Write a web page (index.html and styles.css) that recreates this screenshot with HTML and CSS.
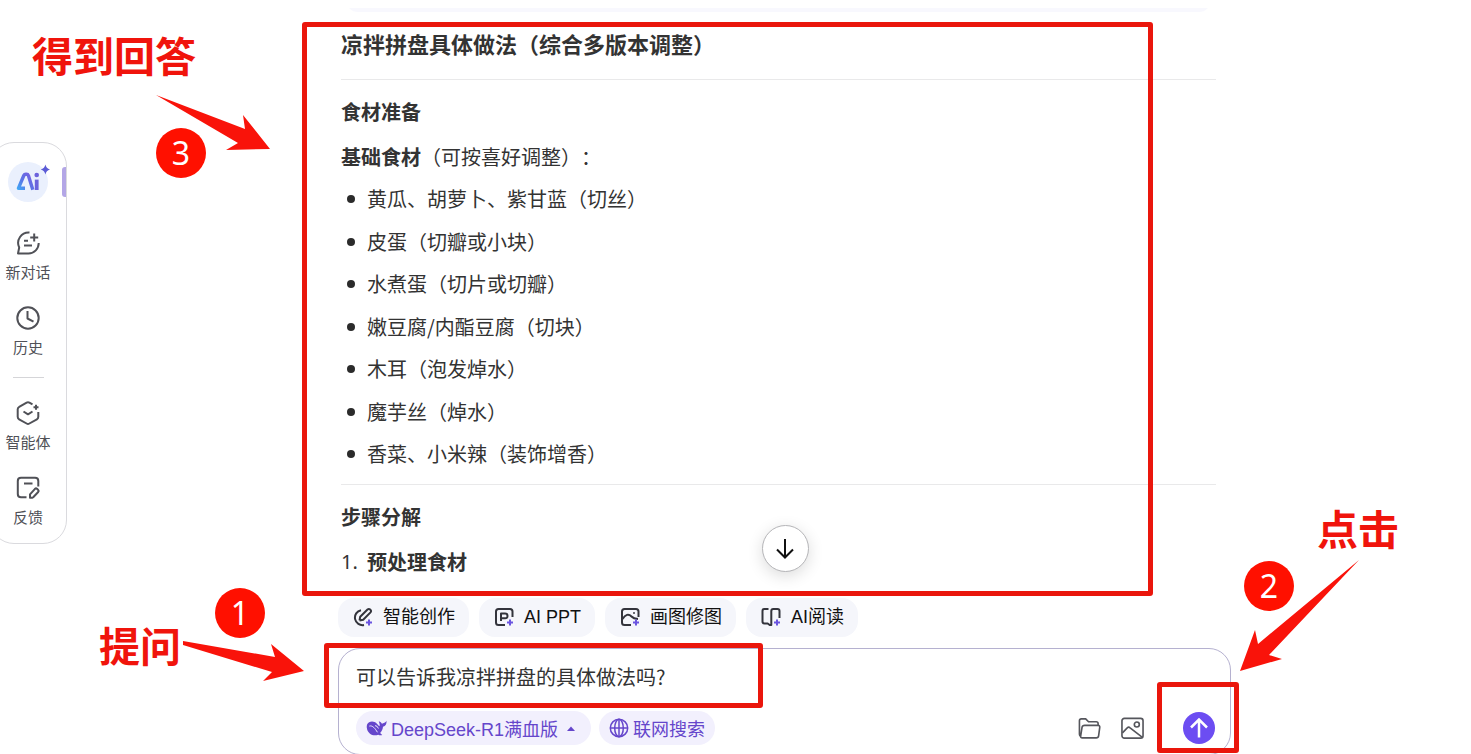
FILE: index.html
```html
<!DOCTYPE html>
<html lang="zh-CN">
<head>
<meta charset="utf-8">
<meta name="viewport" content="width=device-width, initial-scale=1">
<title>AI 对话</title>
<link rel="stylesheet" href="styles.css">
</head>
<body>
<div class="shell">
  <nav class="sidebar" aria-label="主导航">
    <a class="brand" href="#" aria-label="AI 首页">
      <svg width="42" height="42" viewBox="0 0 42 42" aria-hidden="true">
        <defs><linearGradient id="brandFill" x1="0" y1="1" x2="1" y2="0"><stop offset="0" stop-color="#3fa8f5"/><stop offset=".45" stop-color="#5a74e6"/><stop offset="1" stop-color="#7a5ce0"/></linearGradient></defs>
        <circle cx="20" cy="22" r="20" fill="#eaf0fd"/>
        <path d="M17 28.300h-6.600l5.400-12.800q.6-1.300 2-1.300h.7q1.400 0 1.900 1.300l4.400 14.300" fill="none" stroke="url(#brandFill)" stroke-width="3.400" stroke-linejoin="round"/>
        <path d="M28.700 19.600V30" stroke="#6c62dc" stroke-width="3.800"/>
        <circle cx="28.700" cy="15" r="2.300" fill="#6c62dc"/>
        <path d="M37.400 4.500q.8 4 4.600 5-3.800.9-4.600 5-.8-4.100-4.600-5 3.800-1 4.600-5z" fill="#5b5bd6"/>
      </svg>
    </a>
    <a class="nav-item" href="#">
      <svg class="nav-icon" viewBox="0 0 24 24" aria-hidden="true"><path d="M13.500 1.500A10.500 10.500 0 0 0 3.200 16.500L2 22.500h10.500a10.300 10.300 0 0 0 10.200-10.500M8 9.800h4M8 14.500h8M18.200 2.500v8M14.200 6.500h8"/></svg>
      <span>新对话</span>
    </a>
    <a class="nav-item" href="#">
      <svg class="nav-icon" viewBox="0 0 24 24" aria-hidden="true"><circle cx="12" cy="12" r="10.700"/><path d="M11.500 5v7.500l6 3.200"/></svg>
      <span>历史</span>
    </a>
    <hr class="nav-divider">
    <a class="nav-item" href="#">
      <svg class="nav-icon" viewBox="0 0 24 24" aria-hidden="true"><path d="M16.500 3.300 13.400 1.600q-1.400-.8-2.800 0L3.200 5.800Q1.700 6.600 1.700 8.300v7.500q0 1.700 1.400 2.500l7.500 4.200q1.400.8 2.800 0l7.500-4.200q1.400-.8 1.400-2.500V11M7.500 10.500 12 13.300l4.500-2.800M20 3.700v5M17.500 6.200h5"/></svg>
      <span>智能体</span>
    </a>
    <a class="nav-item" href="#">
      <svg class="nav-icon" viewBox="0 0 24 24" aria-hidden="true"><path d="M22.300 10.500V5q0-3.200-3.200-3.200H5Q1.800 1.800 1.800 5v13q0 3.300 3.200 3.300h5.500M8 7.500h8.500M14 21.800v-3.500l5-5.500q1-.8 2 0l1.200 1.200q.8 1 0 2l-5 5.200q-1 .8-3.200.6z"/></svg>
      <span>反馈</span>
    </a>
  </nav>

  <main class="main">
    <div class="column">
      <div class="previous"></div>
      <article class="answer">
        <h2>凉拌拼盘具体做法（综合多版本调整）</h2>
        <hr>
        <h3>食材准备</h3>
        <p><strong>基础食材</strong>（可按喜好调整）：</p>
        <ul>
          <li>黄瓜、胡萝卜、紫甘蓝（切丝）</li>
          <li>皮蛋（切瓣或小块）</li>
          <li>水煮蛋（切片或切瓣）</li>
          <li>嫩豆腐/内酯豆腐（切块）</li>
          <li>木耳（泡发焯水）</li>
          <li>魔芋丝（焯水）</li>
          <li>香菜、小米辣（装饰增香）</li>
        </ul>
        <hr>
        <h3>步骤分解</h3>
        <ol><li><strong>预处理食材</strong></li></ol>
        <button class="scroll-down" type="button" aria-label="滚动到底部">
          <svg width="20" height="22" viewBox="0 0 20 22" aria-hidden="true"><path d="M10 1v18M2 11.500l8 8 8-8"/></svg>
        </button>
      </article>

      <div class="chips">
        <button class="chip" type="button">
          <svg viewBox="0 0 20 20" aria-hidden="true"><path d="M8 3.200A7.500 7.500 0 1 0 11 18M6.500 13.500l.7-3.700 7.300-7.300q1.300-1.100 2.700 0 1.500 1.500.3 2.900l-7.300 7.300-3.700.8"/><path class="spark" d="M16 12.500v6M13 15.500h6"/></svg>
          <span>智能创作</span>
        </button>
        <button class="chip" type="button">
          <svg viewBox="0 0 20 20" aria-hidden="true"><path d="M18.500 10V4.500Q18.500 2 16 2H4.500Q2 2 2 4.500v11Q2 18 4.500 18H11M7 14V6.500h4q2.500 0 2.500 2.400T11 11.200H7"/><path class="spark" d="M16 12.500v6M13 15.500h6"/></svg>
          <span>AI PPT</span>
        </button>
        <button class="chip" type="button">
          <svg viewBox="0 0 20 20" aria-hidden="true"><path d="M18.500 10V4.500Q18.500 2 16 2H4.500Q2 2 2 4.500v11Q2 18 4.500 18H11M2.500 12q4.500-7 9-2.500 2 2.200 6.500 2.500M13.300 6h1.400"/><path class="spark" d="M16 12.500v6M13 15.500h6"/></svg>
          <span>画图修图</span>
        </button>
        <button class="chip" type="button">
          <svg viewBox="0 0 20 20" aria-hidden="true"><path d="M7.500 2H3.300Q1.500 2 1.500 4v10.500q0 2 2 2h3.200l2 1.500h1.600V4q0-2 2-2H16.500q2 0 2 2v7"/><path class="spark" d="M16 12.500v6M13 15.500h6"/></svg>
          <span>AI阅读</span>
        </button>
      </div>

      <form class="composer">
        <input class="question" type="text" aria-label="输入问题" value="可以告诉我凉拌拼盘的具体做法吗?">
        <div class="toolbar">
          <button class="pill model" type="button" aria-haspopup="listbox">
            <svg class="whale" viewBox="0 0 22 18" aria-hidden="true"><path d="M1 5.500C2.500 2.500 6 1.500 9 2.800c2.200 1 3.300 2.800 4.800 4.400 1.200-.8.400-2.800-.4-5.400 1.700.4 2.700 1.500 3.300 2.700 1.600-.3 3.800-1 4.800-3 .3 3.300-1 5.500-3.700 6.300-.3 3-1.400 4.900-3 6.500l2.200 2q-2 .9-4.200-.3C7.500 18 2.500 15 1.200 10.500Q.4 7.500 1 5.500z"/><path class="whale-cut" d="M3.500 7c3.500-1 6 2.500 8.500 6.500M9.500 6.500q2.500 0 3.500 3"/></svg>
            <span>DeepSeek-R1满血版</span>
            <svg class="caret" viewBox="0 0 8 5" aria-hidden="true"><path d="M0 5l4-4.500L8 5z"/></svg>
          </button>
          <button class="pill web" type="button">
            <svg class="globe" viewBox="0 0 20 20" aria-hidden="true"><circle cx="10" cy="10" r="8.700"/><ellipse cx="10" cy="10" rx="4.300" ry="8.700"/><path d="M1.300 10h17.400M10 1.300v17.400"/></svg>
            <span>联网搜索</span>
          </button>
          <div class="actions">
            <button class="tool" type="button" aria-label="上传文件"><svg viewBox="0 0 24 24" aria-hidden="true"><path d="M3 20.500Q1.500 20 1.500 18V4Q1.500 2 3.500 2H8l3 3h8q2 0 2 2v1.800M7 8.800h14q2 0 1.700 2l-1.200 9q-.3 2-2.500 2H4.500q-2 0-1.700-2l1.400-9q.3-2 2.800-2z"/></svg></button>
            <button class="tool" type="button" aria-label="上传图片"><svg viewBox="0 0 24 24" aria-hidden="true"><rect x="1" y="1.500" width="22" height="20.500" rx="2.500"/><circle cx="16.500" cy="7.800" r="2.600"/><path d="M1.500 16.500l5-5.200q1.500-1.300 3 0L22 21"/></svg></button>
            <button class="send" type="submit" aria-label="发送"><svg viewBox="0 0 20 20" aria-hidden="true"><path d="M10 19.500V2M2 9.500l8-8 8 8"/></svg></button>
          </div>
        </div>
      </form>
    </div>
  </main>
</div>

<div class="notes">
  <svg class="arrow arrow-answer" width="116" height="58" viewBox="0 0 116 58" aria-hidden="true"><path d="M1 1l89 34-2-14 27 34-44 1 12-7z"/></svg>
  <svg class="arrow arrow-ask" width="123" height="40" viewBox="0 0 123 40" aria-hidden="true"><path d="M1 0l92 16-4-13 33 27-41 10 9-9L1 4z"/></svg>
  <svg class="arrow arrow-click" width="120" height="112" viewBox="0 0 120 112" aria-hidden="true"><path d="M119 0L18 84l-3-14L0 111l42-12-13-4z"/></svg>
  <div class="frame frame-answer"></div>
  <div class="frame frame-ask"></div>
  <div class="frame frame-send"></div>
  <span class="note note-answer">得到回答</span>
  <span class="note note-ask">提问</span>
  <span class="note note-click">点击</span>
  <span class="badge badge-one">1</span>
  <span class="badge badge-two">2</span>
  <span class="badge badge-three">3</span>
</div>
</body>
</html>
```

FILE: styles.css
```css
* { box-sizing: border-box; }

body {
  margin: 0;
  height: 100vh;
  overflow: hidden;
  position: relative;
  background: #fff;
  color: #333;
  font-family: "Noto Sans CJK SC", "Noto Sans", sans-serif;
  font-size: 20px;
  text-spacing-trim: space-all;
}

button, input { font: inherit; color: inherit; border: 0; margin: 0; }
button { cursor: pointer; }
svg { display: block; flex: none; }

.shell { display: flex; align-items: flex-start; }

/* Sidebar */
.sidebar {
  flex: none;
  width: 77px;
  margin: 142px 0 0 -10px;
  padding: 17px 11px 15px 10px;
  display: flex;
  flex-direction: column;
  align-items: center;
  border: 1px solid #dadade;
  border-radius: 24px;
  position: relative;
}
.sidebar::after {
  content: "";
  position: absolute;
  top: 24px;
  right: 0;
  width: 4px;
  height: 30px;
  border-radius: 3px 0 0 3px;
  background: #b3a6e6;
}
.brand { margin: 0 0 29px 2px; }
.nav-item {
  display: flex;
  flex-direction: column;
  align-items: center;
  gap: 6px;
  height: 75px;
  color: #505157;
  font-size: 15px;
  line-height: 22px;
  text-decoration: none;
}
.nav-icon {
  width: 24px;
  height: 24px;
  fill: none;
  stroke: currentColor;
  stroke-width: 2;
  stroke-linejoin: round;
}
.nav-divider {
  width: 31px;
  margin: -4px 0 23px;
  border: 0;
  border-top: 1px solid #d5d5d8;
}
.sidebar .nav-item:last-child { height: 52px; }

/* Conversation */
.main { flex: 1; padding-left: 31px; min-width: 0; }
.column { max-width: 893px; margin: 0 auto; }
.previous {
  height: 12px;
  margin: 0 20px 0 8px;
  border-radius: 0 0 16px 16px;
  background: linear-gradient(#fff 8px, #f8f8fe 8px);
}
.answer { position: relative; padding: 15px 15px 0 3px; }
.answer h2 { margin: 0; font-size: 22px; line-height: 32px; }
.answer hr { margin: 20px 0 0; border: 0; border-top: 1px solid #e9e9ea; }
.answer h3 { margin: 16px 0 0; font-size: 20px; line-height: 32px; }
.answer p { margin: 13px 0 0; line-height: 32px; }
.answer ul {
  min-height: 287px;
  margin: 10px 0 0;
  padding: 0;
  list-style: none;
  display: flex;
  flex-direction: column;
  justify-content: space-between;
}
.answer ul + hr { margin-top: 14px; }
.answer ul li { display: flex; align-items: center; line-height: 32px; }
.answer ul li::before {
  content: "";
  width: 8px;
  height: 8px;
  margin: 0 12px 0 6px;
  border-radius: 50%;
  background: #2b2b2b;
}
.answer ol {
  margin: 13px 0 0;
  padding: 0 0 20px;
  list-style: none;
  counter-reset: step;
  line-height: 32px;
}
.answer ol li { display: flex; counter-increment: step; }
.answer ol li::before {
  content: counter(step) ".";
  width: 26px;
  font-family: "Noto Sans", sans-serif;
}
.scroll-down {
  position: absolute;
  left: 50%;
  bottom: 26px;
  margin-left: -23px;
  width: 47px;
  height: 47px;
  padding: 0;
  display: grid;
  place-items: center;
  border: 1px solid #b5b5b8;
  border-radius: 50%;
  background: #fff;
  box-shadow: 0 4px 16px rgba(0, 0, 0, .14);
}
.scroll-down svg { fill: none; stroke: #111; stroke-width: 2; }

/* Shortcuts */
.chips { display: flex; gap: 10px; }
.chip {
  display: flex;
  align-items: center;
  gap: 10px;
  height: 39px;
  padding: 0 14px 2px 15px;
  border-radius: 16px;
  background: #f5f6fb;
  color: #111;
  font-family: "Liberation Sans", "Noto Sans CJK SC", sans-serif;
  font-size: 18px;
  line-height: 24px;
  white-space: nowrap;
}
.chip svg {
  width: 20px;
  height: 20px;
  fill: none;
  stroke: #33343c;
  stroke-width: 2;
  stroke-linejoin: round;
}
.chip .spark { stroke: #6b55e0; }

/* Composer */
.composer {
  margin-top: 11px;
  padding: 11px 15px 9px 17px;
  border: 1px solid #b5b1d0;
  border-radius: 22px;
}
.question {
  display: block;
  width: 100%;
  height: 32px;
  padding: 0;
  outline: 0;
  background: transparent;
}
.toolbar { display: flex; align-items: center; gap: 8px; margin-top: 19px; }
.pill {
  display: flex;
  align-items: center;
  height: 34px;
  padding: 0 10px;
  border-radius: 17px;
  background: #f2f0fd;
  color: #6546cb;
  font-family: "Liberation Sans", "Noto Sans CJK SC", sans-serif;
  font-size: 18px;
  white-space: nowrap;
}
.model { gap: 4px; padding-right: 16px; }
.web { gap: 4px; }
.whale { width: 21px; height: 18px; fill: #6546cb; }
.whale-cut { fill: none; stroke: #f2f0fd; stroke-width: 1; }
.caret { width: 8px; height: 5px; margin-left: 5px; fill: #6546cb; }
.globe { width: 20px; height: 20px; fill: none; stroke: #6546cb; stroke-width: 1.500; }
.actions { display: flex; align-items: center; gap: 20px; margin-left: auto; }
.tool { width: 23px; height: 23px; padding: 0; background: transparent; }
.tool svg { width: 23px; height: 23px; fill: none; stroke: #55565c; stroke-width: 1.700; }
.send {
  width: 32px;
  height: 32px;
  margin-left: 19px;
  padding: 0;
  display: grid;
  place-items: center;
  border-radius: 50%;
  background: #6c4df2;
}
.send svg { width: 20px; height: 20px; fill: none; stroke: #fff; stroke-width: 2.500; }

/* Tutorial marks laid over the page */
.notes { position: absolute; inset: 0; pointer-events: none; }
.notes > * { position: absolute; }
.arrow { fill: #f9130a; }
.arrow-answer { left: 155px; top: 94px; }
.arrow-ask { left: 182px; top: 641px; }
.arrow-click { left: 1240px; top: 560px; }
.frame { border: 5px solid #ea160c; border-radius: 3px; }
.frame-answer { left: 302px; top: 22px; width: 851px; height: 574px; }
.frame-ask { left: 324px; top: 643px; width: 439px; height: 65px; }
.frame-send { left: 1157px; top: 682px; width: 82px; height: 71px; }
.note {
  color: #f0140c;
  font-size: 41px;
  font-weight: 700;
  line-height: 48px;
  white-space: nowrap;
}
.note-answer { left: 32px; top: 30px; }
.note-ask { left: 99px; top: 620px; }
.note-click { left: 1317px; top: 503px; }
.badge {
  width: 50px;
  height: 50px;
  border-radius: 50%;
  background: #ff1000;
  color: #fff;
  font-family: "Noto Sans", sans-serif;
  font-size: 32px;
  line-height: 50px;
  text-align: center;
}
.badge-one { left: 215px; top: 588px; }
.badge-two { left: 1244px; top: 561px; }
.badge-three { left: 156px; top: 128px; }
```
